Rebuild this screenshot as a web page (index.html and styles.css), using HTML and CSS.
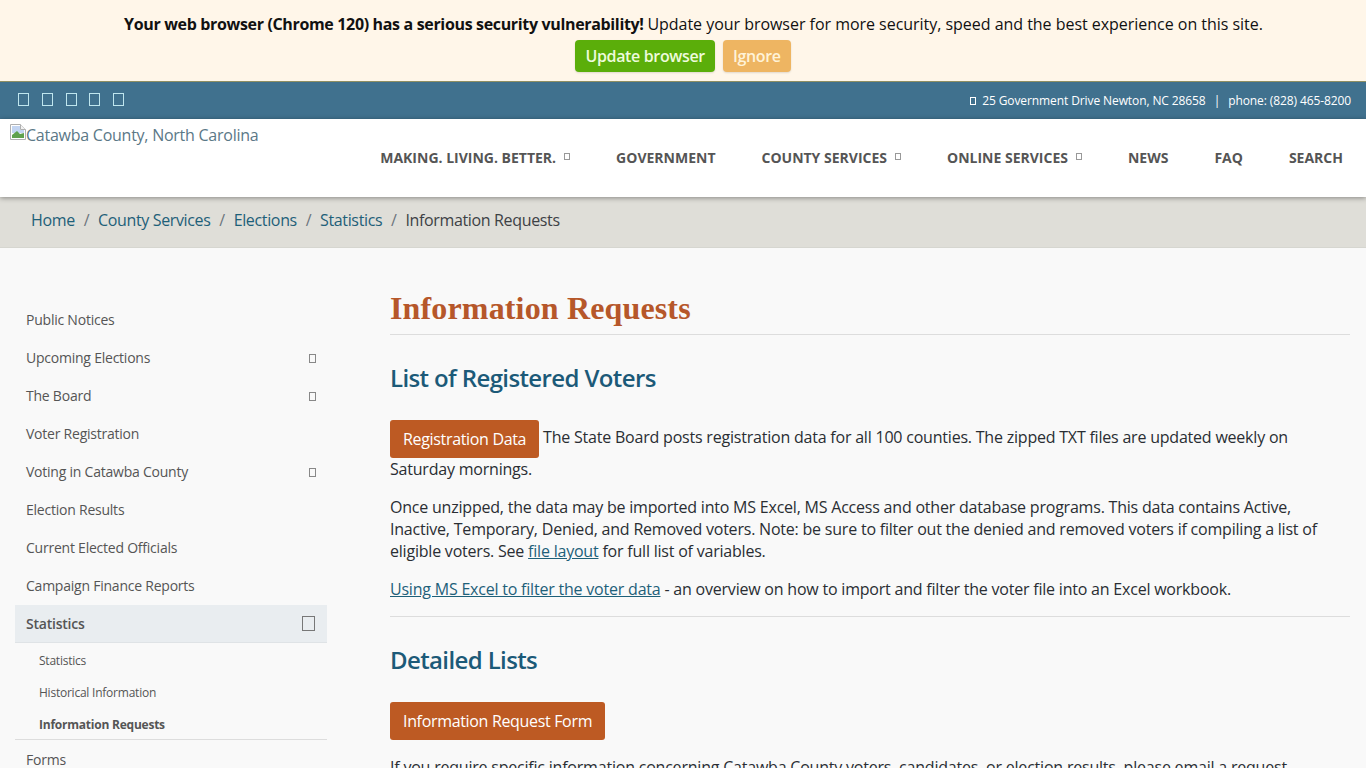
FILE: index.html
```html
<!DOCTYPE html>
<html lang="en">
<head>
<meta charset="utf-8">
<title>Information Requests</title>
<link rel="stylesheet" href="styles.css">
</head>
<body>
<div class="notice">
  <p class="notice-text"><strong>Your web browser (Chrome 120) has a serious security vulnerability!</strong> <span class="notice-rest">Update your browser for more security, speed and the best experience on this site.</span></p>
  <div class="notice-actions"><a class="nbtn update">Update browser</a><a class="nbtn ignore">Ignore</a></div>
</div>
<div class="topbar">
  <div class="social"><i class="tofu"></i><i class="tofu"></i><i class="tofu"></i><i class="tofu"></i><i class="tofu"></i></div>
  <div class="contact"><i class="tofu small"></i><span>25 Government Drive Newton, NC 28658</span><span class="sep">|</span><span>phone: (828) 465-8200</span></div>
</div>
<header class="header">
  <a class="logo"><svg class="broken" width="16" height="16" viewBox="0 0 16 16"><path d="M.5.5h10l5 5v10H.5z" fill="#fff" stroke="#b0b0b0"/><path d="M10.5.5v5h5" fill="#f2f2f2" stroke="#b0b0b0"/><path d="M2 2h8v4h4v3H2z" fill="#c3d5f2"/><path d="M2 14V11l5-4 3 3 4-1v5z" fill="#5fa14d"/></svg><span>Catawba County, North Carolina</span></a>
  <nav class="nav">
    <a>MAKING. LIVING. BETTER.<i class="tofu caret"></i></a>
    <a>GOVERNMENT</a>
    <a>COUNTY SERVICES<i class="tofu caret"></i></a>
    <a>ONLINE SERVICES<i class="tofu caret"></i></a>
    <a>NEWS</a>
    <a>FAQ</a>
    <a>SEARCH</a>
  </nav>
</header>
<div class="crumbs">
  <a>Home</a><span class="slash">/</span><a>County Services</a><span class="slash">/</span><a>Elections</a><span class="slash">/</span><a>Statistics</a><span class="slash">/</span><span>Information Requests</span>
</div>
<div class="layout">
  <aside class="side">
    <a class="item">Public Notices</a>
    <a class="item">Upcoming Elections<i class="tofu side-t"></i></a>
    <a class="item">The Board<i class="tofu side-t"></i></a>
    <a class="item">Voter Registration</a>
    <a class="item">Voting in Catawba County<i class="tofu side-t"></i></a>
    <a class="item">Election Results</a>
    <a class="item">Current Elected Officials</a>
    <a class="item">Campaign Finance Reports</a>
    <a class="item active">Statistics<i class="tofu side-big"></i></a>
    <div class="sub">
      <a>Statistics</a>
      <a>Historical Information</a>
      <a class="cur">Information Requests</a>
    </div>
    <a class="item">Forms</a>
  </aside>
  <main class="main">
    <h1>Information Requests</h1>
    <h2>List of Registered Voters</h2>
    <p><a class="btn">Registration Data</a> The State Board posts registration data for all 100 counties. The zipped TXT files are updated weekly on Saturday mornings.</p>
    <p>Once unzipped, the data may be imported into MS Excel, MS Access and other database programs. This data contains Active, Inactive, Temporary, Denied, and Removed voters. Note: be sure to filter out the denied and removed voters if compiling a list of eligible voters. See <a class="lnk">file layout</a> for full list of variables.</p>
    <p><a class="lnk">Using MS Excel to filter the voter data</a> - an overview on how to import and filter the voter file into an Excel workbook.</p>
    <hr>
    <h2>Detailed Lists</h2>
    <p><a class="btn">Information Request Form</a></p>
    <p>If you require specific information concerning Catawba County voters, candidates, or election results, please email a request</p>
  </main>
</div>
</body>
</html>
```
FILE: styles.css
```css
* { box-sizing: border-box; }
html, body { margin: 0; height: 768px; overflow: hidden; }
body { font-family: "Open Sans", "Noto Sans", sans-serif; font-size: 16px; line-height: 22px; color: #2a2e33; background: #f9f9f9; letter-spacing: -0.21px; }
.tofu { display: inline-block; border: 1px solid currentColor; width: 11px; height: 13px; }
.notice { height: 82px; background: #fff6e9; border-bottom: 1px solid #8f8f63; text-align: center; padding-top: 13px; color: #111; }
.notice-text { margin: 0; height: 27px; padding-left: 21px; letter-spacing: -0.34px; }
.notice-rest { letter-spacing: -0.03px; }
.notice-actions { display: flex; justify-content: center; gap: 8px; }
.nbtn { height: 32px; line-height: 32px; padding: 0 10px; border-radius: 4px; font-weight: 600; letter-spacing: -0.35px; box-shadow: 0 1px 2px rgba(0,0,0,.12); }
.update { background: #5bae0a; color: #eefbdc; }
.ignore { background: #eeb562; color: #fff3d8; }
.topbar { height: 37px; background: #40718e; display: flex; justify-content: space-between; align-items: center; padding: 0 15px 2px 18px; color: #fff; font-size: 12px; letter-spacing: -0.1px; }
.social { display: flex; gap: 12.8px; color: #bfe6ee; }
.contact { display: flex; align-items: center; padding-top: 2px; }
.contact .small { width: 6px; height: 8px; margin-right: 6px; }
.sep { margin: 0 8px; }
.header { height: 78px; background: #fff; display: flex; justify-content: space-between; box-shadow: 0 1px 5px rgba(0,0,0,.4); position: relative; }
.logo { display: flex; align-items: flex-start; padding: 5px 0 0 10px; color: #5b7887; letter-spacing: -0.25px; }
.broken { flex: none; }
.nav { display: flex; gap: 46px; padding: 28px 23px 0 0; font-weight: 700; font-size: 14px; color: #555; letter-spacing: 0; }
.caret { width: 6px; height: 7px; margin-left: 8px; vertical-align: 3px; color: #999; }
.crumbs { height: 51px; background: #dfded8; border-bottom: 1px solid #d6d6d0; padding: 12px 0 0 31px; display: flex; letter-spacing: -0.35px; color: #3d4145; }
.crumbs a { color: #1e6079; }
.slash { margin: 0 8.8px; color: #6c757d; }
.layout { display: flex; }
.side { width: 312px; margin-left: 15px; padding-top: 53px; flex: none; font-size: 14px; color: #555; letter-spacing: -0.23px; }
.item { display: flex; justify-content: space-between; align-items: center; height: 38px; padding: 0 11px; }
.side-t { width: 7px; height: 9px; color: #888; }
.active { background: #e9edf0; font-weight: 600; border-bottom: 1px solid #dfe3e6; }
.side-big { width: 13px; height: 15px; margin-right: 1px; color: #777; }
.sub { display: flex; flex-direction: column; padding: 2px 0 0 24px; border-bottom: 1px solid #ddd; font-size: 12px; height: 97px; }
.sub a { height: 32px; line-height: 32px; }
.cur { font-weight: 700; }
.item + .sub + .item { height: 40px; }
.main { flex: 1; margin-left: 63px; margin-right: 16px; padding-top: 41px; }
h1 { font-family: "Liberation Serif", serif; font-size: 32px; line-height: 38px; font-weight: 700; color: #b6572a; margin: 0; padding-bottom: 7px; border-bottom: 1px solid #ddd; letter-spacing: 0.15px; }
h2 { font-size: 24px; line-height: 29px; font-weight: 600; color: #1c5a78; margin: 28px 0 28px; letter-spacing: -0.62px; }
p { margin: 0 0 16px; }
.btn { display: inline-block; vertical-align: middle; background: #bd5a23; color: #fff; height: 38px; line-height: 38px; padding: 0 13px; border-radius: 3px; letter-spacing: -0.33px; }
.lnk { color: #1e6079; text-decoration: underline; }
hr { border: 0; border-top: 1px solid #ddd; margin: 0; }
```
